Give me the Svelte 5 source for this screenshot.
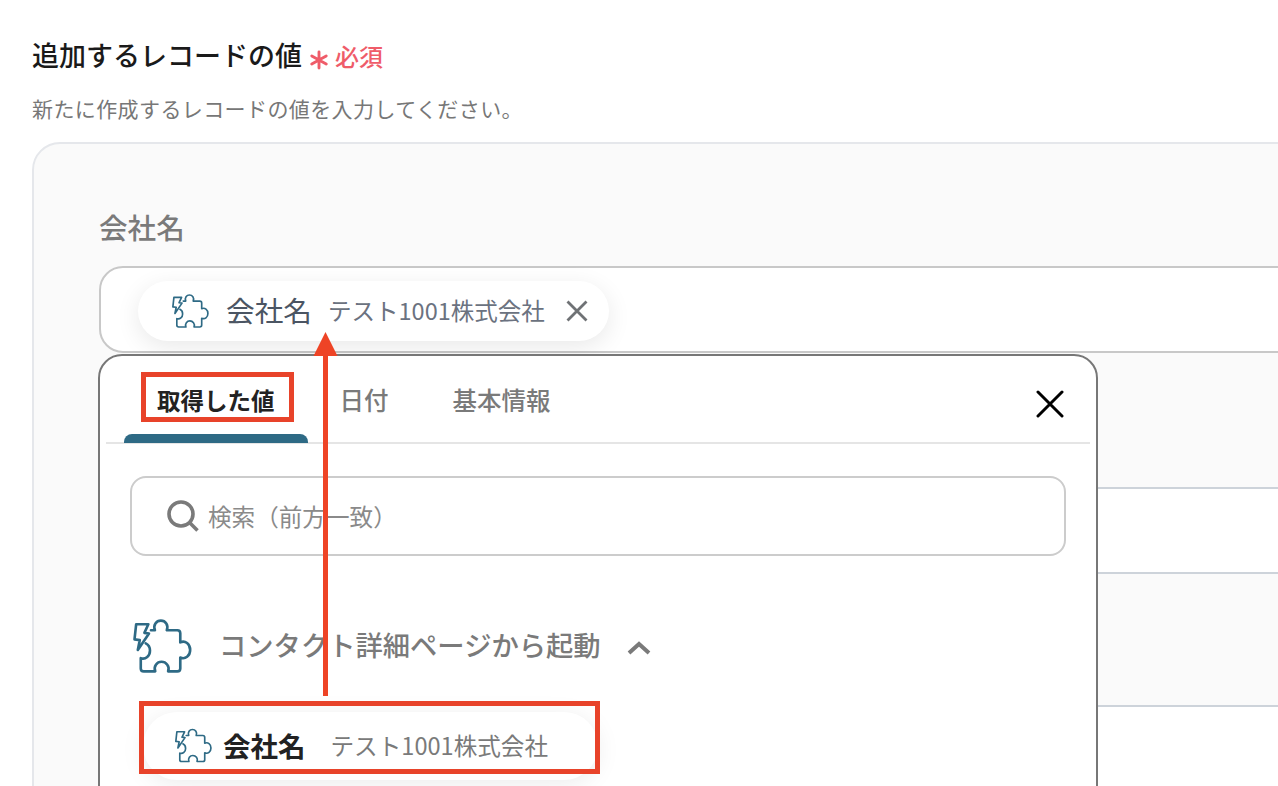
<script>
  const tabs = ['取得した値', '日付', '基本情報'];
</script>

<svelte:head><title>追加するレコードの値</title></svelte:head>

{#snippet puzzle(cls)}
  <svg class={cls} viewBox="24 26 178 164" fill="none" stroke="#2e6a85" stroke-width="8" stroke-linejoin="round" stroke-linecap="round" aria-hidden="true">
    <path d="M33 42 H70 L58 68 L72 70 L38 120 L44 90 L28 88 Z" />
    <path d="M78 60 H90 C84 44 94 31 108 31 C122 31 132 44 126 60 H158 C164 60 167 63 167 69 V97 C182 90 197 102 197 120 C197 138 182 150 167 143 V176 C167 182 164 185 158 185 H130 C136 170 124 156 110 156 C96 156 85 170 91 185 H56 C50 185 47 182 47 176 V145 C62 150 75 138 75 122 C75 112 70 104 62 100" />
  </svg>
{/snippet}

<div class="page">
  <div class="title-row">
    <h1>追加するレコードの値</h1>
    <svg class="star" viewBox="0 0 20 20" aria-hidden="true">
      <path d="M10 1 V19 M2 5.5 L18 14.5 M18 5.5 L2 14.5" stroke="#ef5c69" stroke-width="3.2" stroke-linecap="round" />
    </svg>
    <span class="required">必須</span>
  </div>
  <p class="desc">新たに作成するレコードの値を入力してください。</p>

  <div class="card">
    <div class="field first">
      <div class="label">会社名</div>
      <div class="input">
        <div class="chip">
          {@render puzzle('icon-s')}
          <span class="chip-name">会社名</span>
          <span class="chip-value">テスト1001株式会社</span>
          <svg class="chip-x" viewBox="0 0 22 22" aria-hidden="true">
            <path d="M1.5 1.5 L20.5 20.5 M20.5 1.5 L1.5 20.5" stroke="#6f7275" stroke-width="2.8" />
          </svg>
        </div>
      </div>
    </div>
    <div class="field second"><div class="label"></div><div class="input"></div></div>
    <div class="field third"><div class="label"></div><div class="input"></div></div>
  </div>

  <div class="panel">
    <div class="tabs">
      {#each tabs as tab, i}
        <div class="tab" class:active={i === 0}>{tab}</div>
      {/each}
      <svg class="close" viewBox="0 0 28 28" aria-hidden="true">
        <path d="M2 2 L26 26 M26 2 L2 26" stroke="#000" stroke-width="3" stroke-linecap="round" />
      </svg>
    </div>

    <div class="search">
      <svg class="search-icon" viewBox="0 0 32 32" fill="none" stroke="#7a7a7a" aria-hidden="true">
        <circle cx="14" cy="14" r="12" stroke-width="3.6" />
        <path d="M22.5 22.5 L30.5 30.5" stroke-width="3.6" />
      </svg>
      <span>検索（前方一致）</span>
    </div>

    <div class="section">
      {@render puzzle('icon-l')}
      <span class="section-name">コンタクト詳細ページから起動</span>
      <svg class="chevron" viewBox="0 0 24 14" fill="none" aria-hidden="true">
        <path d="M2 12 L12 3 L22 12" stroke="#7a7a7a" stroke-width="4" />
      </svg>
    </div>

    <div class="item">
      {@render puzzle('icon-m')}
      <span class="item-name">会社名</span>
      <span class="item-value">テスト1001株式会社</span>
    </div>
  </div>

  <div class="mark mark-tab"></div>
  <div class="mark mark-item"></div>
  <svg class="arrow" viewBox="0 0 26 364" aria-hidden="true">
    <path d="M13.5 0 L25.5 24 H16 V364 H11 V24 H1.5 Z" fill="#ee4426" />
  </svg>
</div>

<style>
  :global(body) {
    margin: 0;
    background: #fff;
  }
  .page {
    position: relative;
    height: 786px;
    overflow: hidden;
    box-sizing: border-box;
    padding: 35px 0 0 32px;
    font-family: "Noto Sans CJK JP", "Noto Sans", sans-serif;
    color: #222;
  }
  .title-row {
    display: flex;
    align-items: center;
    height: 40px;
  }
  h1 {
    margin: 0;
    font-size: 27px;
    font-weight: 500;
    line-height: 40px;
    color: #1a1a1a;
  }
  .star {
    width: 18px;
    height: 20px;
    margin: 10px 7px 0 8px;
  }
  .required {
    font-size: 24px;
    font-weight: 500;
    color: #ef5c69;
    line-height: 40px;
    margin-top: 2px;
  }
  .desc {
    margin: 18px 0 0;
    font-size: 21px;
    letter-spacing: 0.4px;
    line-height: 30px;
    color: #777;
  }
  .card {
    margin-top: 19px;
    width: 1500px;
    height: 800px;
    box-sizing: border-box;
    background: #fafafa;
    border: 2px solid #e5e7eb;
    border-radius: 28px;
    padding-left: 65px;
  }
  .field.first { margin-top: 63px; }
  .field.second { margin-top: 75px; }
  .field.third { margin-top: 72px; }
  .label {
    height: 40px;
    margin-bottom: 19px;
    font-size: 28.6px;
    font-weight: 500;
    line-height: 40px;
    color: #7a7a7a;
  }
  .input {
    height: 87px;
    box-sizing: border-box;
    background: #fff;
    border: 2px solid #c8c8c8;
    border-radius: 24px;
    padding: 13px 0 0 37px;
  }
  .second .input, .third .input {
    border-color: #cdd3da;
  }
  .chip {
    display: flex;
    align-items: center;
    width: 471px;
    height: 60px;
    box-sizing: border-box;
    padding-left: 34px;
    background: #fff;
    border-radius: 30px;
    box-shadow: 0 6px 24px rgba(0, 0, 0, 0.09);
  }
  .icon-s { width: 37px; height: 34px; flex: none; }
  .icon-m { width: 37px; height: 35px; flex: none; }
  .icon-l { width: 59px; height: 54px; flex: none; }
  .chip-name {
    margin: -2px 0 0 17px;
    font-size: 28.7px;
    line-height: 40px;
    color: #4b5563;
  }
  .chip-value {
    margin: -2px 0 0 16px;
    font-size: 23.5px;
    line-height: 40px;
    color: #6b7280;
    white-space: nowrap;
  }
  .chip-x {
    width: 22px;
    height: 22px;
    margin-left: 21px;
    flex: none;
  }
  .panel {
    position: absolute;
    left: 98px;
    top: 354px;
    width: 1000px;
    height: 460px;
    box-sizing: border-box;
    background: #fff;
    border: 2px solid #777;
    border-radius: 24px 24px 0 0;
  }
  .tabs {
    display: flex;
    align-items: stretch;
    height: 88px;
    box-sizing: border-box;
    margin: 0 6px;
    padding-left: 18px;
    border-bottom: 2px solid #e5e5e5;
  }
  .tab {
    position: relative;
    padding: 24px 32px 0;
    font-size: 24.5px;
    font-weight: 500;
    line-height: 40px;
    color: #7a7a7a;
  }
  .tab.active {
    padding: 24px 33px 0;
    font-size: 23.5px;
    font-weight: 700;
    color: #222;
  }
  .tab.active::after {
    content: "";
    position: absolute;
    left: 0;
    right: 0;
    bottom: -1px;
    height: 9px;
    background: #2e6a85;
    border-radius: 8px 8px 0 0;
  }
  .close {
    width: 28px;
    height: 28px;
    margin: 34px 26px 0 auto;
    flex: none;
  }
  .search {
    display: flex;
    align-items: center;
    gap: 9px;
    height: 80px;
    box-sizing: border-box;
    margin: 32px 30px 0 30px;
    padding-left: 35px;
    border: 2px solid #ccc;
    border-radius: 16px;
    font-size: 23.6px;
    color: #8a8a8a;
  }
  .search-icon { width: 32px; height: 32px; flex: none; }
  .section {
    display: flex;
    align-items: center;
    margin: 63px 0 0 33px;
  }
  .section-name {
    margin: 0 0 4px 27px;
    font-size: 27.3px;
    font-weight: 500;
    color: #7a7a7a;
    line-height: 40px;
  }
  .chevron {
    width: 24px;
    height: 14px;
    margin: 3px 0 0 26px;
  }
  .item {
    display: flex;
    align-items: center;
    width: 455px;
    height: 68px;
    box-sizing: border-box;
    margin: 39px 0 0 43px;
    padding: 0 0 2px 32px;
    background: #fff;
    border-radius: 34px;
    box-shadow: 0 4px 24px rgba(0, 0, 0, 0.08);
  }
  .item-name {
    margin-left: 11px;
    font-size: 27.5px;
    font-weight: 700;
    color: #222;
  }
  .item-value {
    margin-left: 25px;
    font-size: 23.6px;
    color: #7a7a7a;
    white-space: nowrap;
  }
  .mark {
    position: absolute;
    box-sizing: border-box;
    border: 5px solid #e8432a;
  }
  .mark-tab { left: 141px; top: 372px; width: 153px; height: 50px; }
  .mark-item { left: 139px; top: 701px; width: 461px; height: 73px; }
  .arrow {
    position: absolute;
    left: 312px;
    top: 332px;
    width: 26px;
    height: 364px;
  }
</style>
